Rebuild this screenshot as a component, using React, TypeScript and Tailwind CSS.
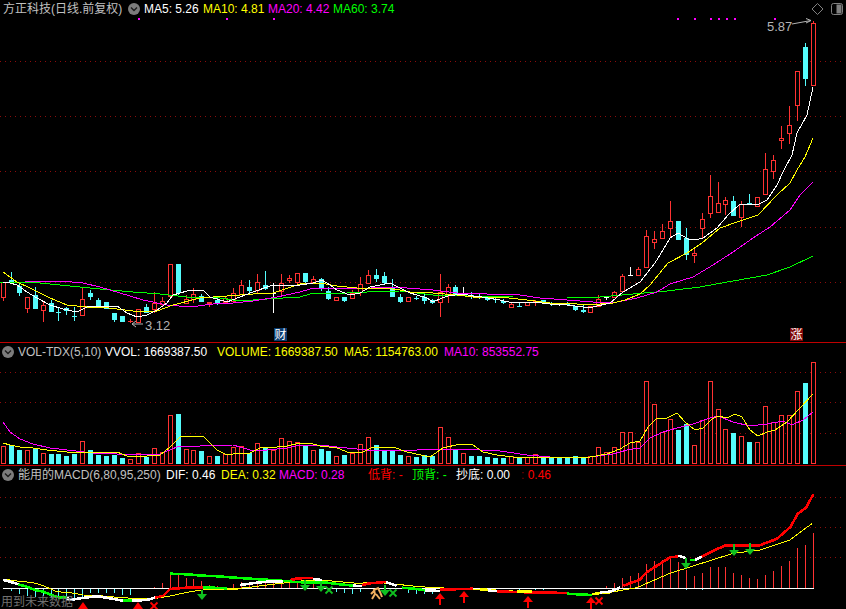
import React from "react";

type C = [string, number, number, number?, number?];
const RED = "#ff3232";
const CYAN = "#54fcfc";
const cx = (k: number) => Math.floor(3.4 + 7.94 * k);

const candles: C[] = [
  ["r",282,298,282,301],["c",280,282,272,283],["c",286,293,283,296],["r",297,309,297,313],["c",295,309,287,309],
  ["r",305,311,302,322],["c",303,312,300,312],["c",312,312,307,321],["c",308,311,307,315],["c",316,316,307,321],
  ["r",299,316,288,316],["c",293,297,290,300],["c",300,306,298,306],["c",302,309,302,309],["c",313,320,313,322],
  ["c",316,322,316,322],["r",321,321,319,323],["r",309,323,309,323],["c",307,313,304,313],["r",303,310,292,313],
  ["r",301,305,297,307],["r",264,297,264,297],["c",264,293,264,295],["r",299,304,295,304],["r",294,300,288,303],
  ["c",296,302,294,302],["r",302,304,302,307],["c",300,303,297,305],["r",298,303,296,304],["r",293,302,288,302],
  ["r",285,295,280,295],["c",287,291,280,293],["r",282,291,274,293],["c",285,289,271,290],["w",293,293,283,313],
  ["r",283,292,274,295],["r",278,281,275,283],["r",273,283,273,285],["c",273,282,273,283],["r",279,283,276,283],
  ["c",279,288,278,291],["c",291,299,287,300],["r",297,301,297,301],["c",297,301,297,302],["r",293,299,290,299],
  ["r",284,293,277,296],["r",275,284,270,284],["c",275,279,269,282],["c",276,283,272,285],["c",287,297,279,297],
  ["c",297,302,294,303],["r",297,302,297,302],["c",298,299,296,300],["c",297,301,294,304],["c",300,303,299,304],
  ["r",292,303,274,317],["r",287,295,284,303],["c",287,295,285,296],["w",293,293,287,296],["c",295,296,292,299],
  ["c",296,296,293,299],["c",298,300,297,301],["c",299,299,297,303],["c",301,303,299,304],["r",304,308,303,308],
  ["c",306,306,302,307],["r",302,306,302,306],["r",301,303,300,306],["c",300,303,300,304],["c",303,304,302,306],
  ["w",304,304,303,306],["c",303,305,302,306],["c",306,310,306,311],["c",310,312,305,313],["r",306,313,306,313],
  ["r",299,307,295,307],["w",297,297,297,300],["r",292,298,291,298],["r",276,292,274,292],["w",275,275,267,275],
  ["r",269,276,267,276],["r",236,268,230,268],["r",239,243,231,249],["r",231,239,224,239],["r",221,229,201,237],
  ["c",221,240,221,240],["c",238,255,228,260],["r",253,256,249,263],["r",219,229,213,238],["r",196,214,175,218],
  ["r",203,213,182,213],["r",200,205,197,215],["c",201,216,196,216],["r",204,218,201,227],["c",203,203,194,205],
  ["r",197,207,197,207],["r",169,195,153,195],["r",160,172,155,179],["r",138,141,126,149],["r",125,134,106,144],
  ["r",71,106,71,121],["c",47,79,43,86],["r",23,86,21,86],
];

const ma5 = "3,282 10,283 17,285 27,292 37,298 50,305 63,309 77,312 87,307 100,306 117,306 127,313 137,317 147,315 157,310 167,303 173,295 187,291 203,290 210,297 227,302 240,297 253,292 273,285 300,285 313,283 322,280 330,285 337,290 350,295 360,293 370,287 380,285 390,283 400,288 410,293 417,295 427,298 433,302 442,298 448,296 463,294 473,296 482,297 500,300 513,303 533,302 550,304 567,305 583,307 593,307 610,303 623,292 640,282 655,263 663,250 670,238 678,233 688,239 695,240 703,238 717,228 728,215 740,204 757,205 767,200 777,185 784,170 792,155 797,133 807,115 813,87";
const ma10 = "3,272 17,282 30,288 50,298 67,305 87,307 100,307 117,309 133,311 157,311 173,305 200,298 227,296 253,294 273,293 300,284 320,283 337,286 357,288 383,288 400,290 410,292 433,293 457,295 473,297 500,297 527,300 550,303 577,304 600,304 613,303 625,300 640,294 650,285 668,263 687,253 702,243 720,228 740,221 758,215 777,195 790,183 797,170 805,157 813,138";
const ma20 = "25,281 60,281 83,283 100,287 120,293 143,300 167,305 190,307 213,304 233,303 253,301 277,297 300,292 310,289 333,288 360,289 383,287 407,288 433,290 457,293 487,294 513,294 540,298 567,300 593,302 600,303 617,302 637,298 657,292 670,284 693,277 713,265 733,252 753,238 770,227 790,210 800,195 813,182";
const ma60 = "0,282 30,282 60,285 100,289 133,292 160,294 187,297 213,297 240,301 267,299 300,297 310,294 327,293 347,293 367,292 400,291 433,295 467,296 513,297 567,297 600,297 633,294 667,291 700,287 733,281 767,275 790,267 813,256";

const volTops = [
  ...[318,316,330,330,328,340,342,342,347,343,304,330,345,347,344,354,358,340,350,325,337,226,222,328,330,333,348,348,343,322,317,338,310,323,330,295,302,307].map((v) => 340 + v / 3),
  ...[318,330,327,333,348,345,340,313,292,315,330,330,345,348,350,345,348,262,292,330,340,348,348,351,354,354,349,353,352,343,352,354,354,354].map((v) => 340 + v / 3),
  ...[333,338,334,307,320,307,262,262,292,109,178,262,223,255,238,301,226,109,193,253,264,274,291,292,184,232,211,211,139,114,52].map((v) => 345 + v / 3),
];
const volCyan = new Set([1,2,4,6,7,8,9,11,12,13,14,15,18,22,25,27,31,33,38,40,41,43,47,48,49,50,52,53,54,57,59,60,61,62,63,65,68,69,70,71,72,73,85,86,92,94,101]);
const volMa5 = "3,443 10,445 20,447 33,448 47,450 67,452 93,452 117,452 127,456 147,456 160,455 170,447 180,437 203,436 217,450 227,455 240,453 250,453 260,448 277,447 287,446 300,443 310,443 320,446 337,448 350,453 363,452 373,447 393,447 407,452 430,457 443,448 460,444 473,445 483,452 497,455 513,457 533,457 550,457 577,457 590,457 607,454 620,449 630,443 640,441 648,427 657,418 667,418 677,413 685,422 695,430 703,428 712,419 718,416 727,418 735,414 742,417 750,430 758,436 767,432 775,430 787,422 800,408 813,394";
const volMa10 = "3,422 10,432 20,439 33,444 50,448 67,450 93,453 117,454 140,455 160,454 177,447 200,446 233,445 250,450 267,450 287,448 300,445 320,445 337,447 367,450 417,450 433,449 460,449 500,451 527,455 550,457 577,457 590,457 613,454 627,450 640,448 650,438 663,432 677,428 693,424 710,418 718,416 733,422 750,426 767,424 783,421 792,425 803,420 813,412";

const z = (ox: number, s: string) =>
  s.split(" ").map((p) => { const [a, b] = p.split(",").map(Number); return `${(ox + a / 3).toFixed(1)},${(465 + b / 3).toFixed(1)}`; }).join(" ");

const macdThick: [string, string][] = [
  ["#ffffff", z(0, "10,345 30,350 55,358")],
  ["#00ff00", z(0, "55,358 80,365 105,375 130,380 155,390 180,398 200,398")],
  ["#ffffff", z(0, "200,398 210,405 240,400 280,395 300,395 330,400 370,407")],
  ["#00ff00", z(0, "370,407 395,407")],
  ["#ffffff", z(0, "395,407 440,405 465,398")],
  ["#ff0000", z(0, "465,398 490,392 510,372 560,368 610,367")],
  ["#00ff00", z(0, "610,367 680,370")],
  ["#ffff00", z(0, "680,372 715,372")],
  ["#00ff00", z(0, "510,326 560,328 610,332 655,334 705,338 750,341 800,344 840,347 880,349")],
  ["#ffffff", z(0, "720,360 770,353 800,350 850,350")],
  ["#ff0000", z(0, "870,345 900,340")],
  ["#ff0000", z(290, "0,345 20,340 70,339")],
  ["#ffffff", z(290, "70,342 95,345")],
  ["#00ff00", z(290, "0,350 40,352 100,352 150,358 190,362")],
  ["#ffffff", z(290, "190,362 215,363")],
  ["#ff0000", z(290, "215,360 240,355 288,351")],
  ["#ffffff", z(290, "288,352 320,362")],
  ["#00ff00", z(290, "335,368 380,372 405,376")],
  ["#ffffff", z(290, "405,376 450,378")],
  ["#ff0000", z(290, "450,374 550,371")],
  ["#ffff00", z(290, "570,373 600,375")],
  ["#ffffff", z(290, "595,377 620,378")],
  ["#ff0000", z(290, "620,379 670,381 830,384")],
  ["#ffff00", z(290, "680,379 725,380")],
  ["#00ff00", z(290, "830,386 905,390")],
  ["#ffff00", z(290, "905,388 930,384 960,382")],
  ["#ffffff", z(600, "0,382 30,380 60,368")],
  ["#ff0000", z(600, "70,362 118,345 140,322 185,293 212,276 235,275")],
  ["#ffffff", z(600, "235,272 258,280")],
  ["#00ff00", z(600, "270,285 285,285")],
  ["#ffffff", z(600, "285,285 305,275")],
  ["#ff0000", z(600, "305,275 340,257 375,242 475,242 530,222 572,185 592,148 618,128 640,88")],
];
const dea = z(0, "10,342 50,348 100,353 130,362 170,380 210,383 250,390 310,393 350,397 400,400 470,400 510,393 570,380 610,375 680,372 740,368 800,360 870,352") + " " +
  z(290, "0,352 50,346 100,346 150,350 200,355 260,352 320,358 390,365 440,368 530,372 600,374 670,378 730,380 830,384 905,388 960,382") + " " +
  z(600, "110,368 210,325 320,290 400,265 480,255 570,225 637,175");

const macdCyan: [number, number][] = [[1,378],[2,388],[3,393],[4,395],[5,393],[6,398],[7,400],[8,405],[9,405],[10,395],[11,385],[12,385],[13,385],[14,385],[15,390],[16,390],[42,382],[43,385],[44,388],[45,382],[51,385],[52,387],[53,388],[54,388],[62,376],[65,376],[67,376],[68,374],[86,374],[88,374]];
const macdRed: [number, number][] = [[19,365],[20,355],[21,327],[22,330],[23,338],[24,343],[25,348],[26,360],[27,362],[29,358],[30,352],[31,350],[32,348],[33,345],[34,345],[35,348],[36,352],[37,350],[38,352],[39,350],[40,352],
  ...[363,355,340,333,325,297,288,284,278,292,315,333,323,306,306,306,323,330,339,342,330,318,303,288,249,240,205].map((v, i) => [76 + i, v] as [number, number])];

function Grid({ ys }: { ys: number[] }) {
  return <g shapeRendering="crispEdges">{ys.map((y) => <line key={y} x1={0} x2={842} y1={y + 0.5} y2={y + 0.5} stroke="#8c0c0c" strokeDasharray="1 4" />)}</g>;
}
function Line({ pts, color, w = 1 }: { pts: string; color: string; w?: number }) {
  return <polyline points={pts} fill="none" stroke={color} strokeWidth={w} shapeRendering="crispEdges" />;
}
function Hollow({ x, y, h, color }: { x: number; y: number; h: number; color: string }) {
  return (
    <>
      <rect x={x - 2} y={y} width={5} height={h} fill={color} />
      {h > 2 && <rect x={x - 1} y={y + 1} width={3} height={h - 2} fill="#000000" />}
    </>
  );
}
function Toggle() {
  return (
    <svg width="12" height="12" viewBox="0 0 12 12" className="shrink-0">
      <circle cx="6" cy="6" r="6" fill="#7c7c7c" />
      <path d="M3 4.5 6 7.5 9 4.5" fill="none" stroke="#1c1c1c" strokeWidth="1.4" />
    </svg>
  );
}
function Down({ x, y1, y2 }: { x: number; y1: number; y2: number }) {
  return <g fill="#10c020"><rect x={x - 1} y={y1} width={2} height={y2 - y1 - 5} /><polygon points={`${x - 5},${y2 - 6} ${x + 5},${y2 - 6} ${x},${y2}`} /></g>;
}
function Up({ x, y1, y2 }: { x: number; y1: number; y2: number }) {
  return <g fill="#ff0000"><rect x={x - 1} y={y1 + 4} width={2} height={y2 - y1 - 4} /><polygon points={`${x - 5},${y1 + 6} ${x + 5},${y1 + 6} ${x},${y1}`} /></g>;
}
function Cross({ x, y, color }: { x: number; y: number; color: string }) {
  return <path d={`M${x - 3.5} ${y - 3.5}L${x + 3.5} ${y + 3.5}M${x + 3.5} ${y - 3.5}L${x - 3.5} ${y + 3.5}`} stroke={color} strokeWidth="1.8" fill="none" />;
}

export default function App() {
  return (
    <div className="flex h-[609px] w-[846px] flex-col overflow-hidden bg-black font-['Liberation_Sans','Noto_Sans_CJK_SC',sans-serif] text-[12px] leading-none">
      {/* price pane */}
      <section className="relative h-[343px] shrink-0 border-b border-[#c00000]">
        <header className="flex h-[18px] items-center pl-[3px] whitespace-nowrap">
          <span className="w-[125px] text-[#c0c0c0]">方正科技(日线.前复权)</span>
          <Toggle />
          <span className="ml-[4px] w-[59px] text-white">MA5: 5.26</span>
          <span className="w-[65px] text-[#ffff00]">MA10: 4.81</span>
          <span className="w-[65px] text-[#ff00ff]">MA20: 4.42</span>
          <span className="text-[#00ff00]">MA60: 3.74</span>
          <svg width="31" height="12" viewBox="0 0 31 12" fill="none" stroke="#808080" className="ml-auto mr-[3px]">
            <path d="M5.5 .5 11 6 5.500 11.500 0 6Z" />
            <rect x="19.500" y=".5" width="11" height="11" rx="2" />
            <rect x="25" y="2" width="4" height="8" fill="#808080" />
          </svg>
        </header>
        <svg width="846" height="324" viewBox="0 18 846 324" className="block">
          <Grid ys={[61, 116, 171, 227, 282]} />
          {[138, 226, 273, 677, 694, 710, 718, 726, 734, 774].map((x) => <rect key={x} x={x} y={18} width={2} height={2} fill="#ff00ff" />)}
          <g shapeRendering="crispEdges">
            {candles.map(([t, a, b, wt, wb], k) => {
              const x = cx(k);
              const col = t === "r" ? RED : t === "c" ? CYAN : "#ffffff";
              return (
                <g key={k}>
                  <rect x={x} y={wt ?? a} width={1} height={Math.max(1, (wb ?? b) - (wt ?? a))} fill={col} />
                  {a === b ? <rect x={x - 2} y={a} width={5} height={1} fill={col} />
                    : t === "r" ? <Hollow x={x} y={a} h={b - a} color={col} />
                    : <rect x={x - 2} y={a} width={5} height={b - a} fill={col} />}
                </g>
              );
            })}
          </g>
          <Line pts={ma60} color="#00ff00" />
          <Line pts={ma20} color="#ff00ff" />
          <Line pts={ma10} color="#ffff00" />
          <Line pts={ma5} color="#ffffff" />
          <text x={767} y={31} fill="#b4b4b4" fontSize="13" fontFamily="Liberation Sans">5.87</text>
          <path d="M792 24 811 20.500M806 18.500 811 20.500 806 23" fill="none" stroke="#b4b4b4" />
          <text x={145} y={330} fill="#b4b4b4" fontSize="13" fontFamily="Liberation Sans">3.12</text>
          <path d="M143 324H132M136 321 132 324 136 327" fill="none" stroke="#b4b4b4" />
        </svg>
        <span className="absolute left-[274px] top-[328px] flex h-[13px] w-[13px] items-center justify-center bg-[#0a3c70] text-white">财</span>
        <span className="absolute left-[790px] top-[328px] flex h-[13px] w-[13px] items-center justify-center bg-[#800808] text-white">涨</span>
      </section>

      {/* volume pane */}
      <section className="h-[123px] shrink-0 border-b border-[#c00000]">
        <header className="flex h-[18px] items-center pl-[2px] whitespace-nowrap">
          <Toggle />
          <span className="ml-[4px] w-[87px] text-[#c0c0c0]">VOL-TDX(5,10)</span>
          <span className="w-[112px] text-white">VVOL: 1669387.50</span>
          <span className="w-[127px] text-[#ffff00]">VOLUME: 1669387.50</span>
          <span className="w-[100px] text-[#ffff00]">MA5: 1154763.00</span>
          <span className="text-[#ff00ff]">MA10: 853552.75</span>
        </header>
        <svg width="846" height="104" viewBox="0 361 846 104" className="block">
          <Grid ys={[372, 402, 433]} />
          <g shapeRendering="crispEdges">
            {volTops.map((y, k) => {
              const x = cx(k);
              const t = Math.round(y);
              return volCyan.has(k)
                ? <rect key={k} x={x - 2} y={t} width={5} height={464 - t} fill={CYAN} />
                : <Hollow key={k} x={x} y={t} h={464 - t} color={RED} />;
            })}
          </g>
          <Line pts={volMa10} color="#ff00ff" />
          <Line pts={volMa5} color="#ffff00" />
        </svg>
      </section>

      {/* macd pane */}
      <section className="relative min-h-0 flex-1">
        <header className="flex h-[18px] items-center pl-[2px] whitespace-nowrap">
          <Toggle />
          <span className="ml-[4px] w-[148px] text-[#c0c0c0]">能用的MACD(6,80,95,250)</span>
          <span className="w-[55px] text-white">DIF: 0.46</span>
          <span className="w-[58px] text-[#ffff00]">DEA: 0.32</span>
          <span className="w-[89px] text-[#ff00ff]">MACD: 0.28</span>
          <span className="w-[44px] text-[#ff0000]">低背: -</span>
          <span className="w-[44px] text-[#00ff00]">顶背: -</span>
          <span className="w-[65px] text-white">抄底: 0.00</span>
          <span className="text-[#ff0000]"><span className="text-[#800000]">:</span> 0.46</span>
        </header>
        <svg width="846" height="125" viewBox="0 484 846 125" className="block">
          <Grid ys={[497, 527, 557]} />
          <g shapeRendering="crispEdges">
            {macdCyan.map(([k, Y]) => <rect key={k} x={cx(k)} y={588} width={1} height={Math.round(465 + Y / 3) - 588} fill={CYAN} />)}
            {macdRed.map(([k, Y]) => <rect key={k} x={cx(k)} y={Math.round(465 + Y / 3)} width={1} height={588 - Math.round(465 + Y / 3)} fill={RED} />)}
            <rect x={3} y={588} width={811} height={1} fill="#ffffff" />
          </g>
          <Line pts={dea} color="#ffff00" />
          {macdThick.map(([c, p], i) => <Line key={i} pts={p} color={c} w={2.6} />)}
          <polygon points="78,609 83,602 88,609" fill="#ff0000" />
          <polygon points="133,609 138,602 143,609" fill="#ff0000" />
          <Cross x={154} y={606} color="#ff0000" />
          <Down x={202} y1={590} y2={600} />
          <Down x={305} y1={580} y2={591} />
          <Down x={321} y1={582} y2={592} />
          <Cross x={329} y={590} color="#10c020" />
          <path d="M372 599 375 594 374 590 378 588 380 592 382 597M376 594 380 599M374 591 371 594" fill="none" stroke="#f0b060" strokeWidth="2" />
          <Down x={385} y1={585} y2={596} />
          <Cross x={393} y={593} color="#10c020" />
          <Up x={440} y1={593} y2={605} />
          <Up x={464} y1={591} y2={603} />
          <Up x={528} y1={596} y2={608} />
          <Up x={591} y1={597} y2={609} />
          <Cross x={599} y={601} color="#ff0000" />
          <Down x={686} y1={558} y2={569} />
          <Down x={734} y1={544} y2={556} />
          <Down x={750} y1={543} y2={555} />
        </svg>
        <span className="absolute bottom-[1px] left-[1px] text-[#707070]">用到未来数据</span>
      </section>
    </div>
  );
}
